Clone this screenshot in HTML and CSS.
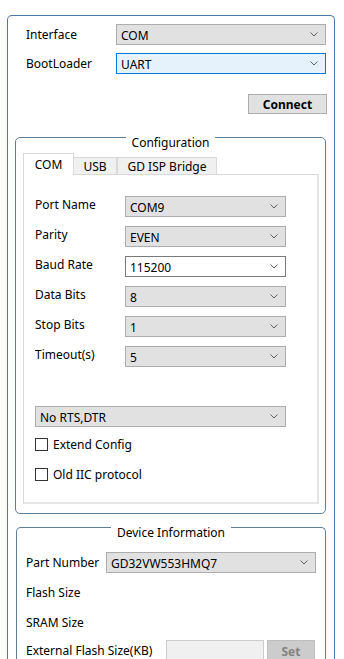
FILE: index.html
```html
<!DOCTYPE html>
<html>
<head>
<meta charset="utf-8">
<link rel="stylesheet" href="styles.css">
</head>
<body>
<div class="frame">
  <div class="top-rows">
    <div class="row">
      <span class="lbl lbl-top">Interface</span>
      <div class="combo combo-wide"><span>COM</span><svg class="chev" width="8" height="5" viewBox="0 0 8 5"><polyline points="0.5,0.5 4,4 7.5,0.5"/></svg></div>
    </div>
    <div class="row">
      <span class="lbl lbl-top">BootLoader</span>
      <div class="combo combo-wide combo-focus"><span>UART</span><svg class="chev" width="8" height="5" viewBox="0 0 8 5"><polyline points="0.5,0.5 4,4 7.5,0.5"/></svg></div>
    </div>
  </div>
  <div class="actions">
    <button class="btn btn-connect">Connect</button>
  </div>

  <section class="group group-config">
    <div class="group-title">Configuration</div>
    <div class="tabs">
      <div class="tab tab-active">COM</div>
      <div class="tab tab-usb">USB</div>
      <div class="tab tab-gd">GD ISP Bridge</div>
    </div>
    <div class="pane">
      <div class="pane-rows">
        <div class="row">
          <span class="lbl lbl-pane">Port Name</span>
          <div class="combo combo-pane"><span>COM9</span><svg class="chev" width="8" height="5" viewBox="0 0 8 5"><polyline points="0.5,0.5 4,4 7.5,0.5"/></svg></div>
        </div>
        <div class="row">
          <span class="lbl lbl-pane">Parity</span>
          <div class="combo combo-pane"><span>EVEN</span><svg class="chev" width="8" height="5" viewBox="0 0 8 5"><polyline points="0.5,0.5 4,4 7.5,0.5"/></svg></div>
        </div>
        <div class="row">
          <span class="lbl lbl-pane">Baud Rate</span>
          <div class="combo combo-pane combo-edit"><span>115200</span><svg class="chev" width="8" height="5" viewBox="0 0 8 5"><polyline points="0.5,0.5 4,4 7.5,0.5"/></svg></div>
        </div>
        <div class="row">
          <span class="lbl lbl-pane">Data Bits</span>
          <div class="combo combo-pane"><span>8</span><svg class="chev" width="8" height="5" viewBox="0 0 8 5"><polyline points="0.5,0.5 4,4 7.5,0.5"/></svg></div>
        </div>
        <div class="row">
          <span class="lbl lbl-pane">Stop Bits</span>
          <div class="combo combo-pane"><span>1</span><svg class="chev" width="8" height="5" viewBox="0 0 8 5"><polyline points="0.5,0.5 4,4 7.5,0.5"/></svg></div>
        </div>
        <div class="row">
          <span class="lbl lbl-pane">Timeout(s)</span>
          <div class="combo combo-pane"><span>5</span><svg class="chev" width="8" height="5" viewBox="0 0 8 5"><polyline points="0.5,0.5 4,4 7.5,0.5"/></svg></div>
        </div>
      </div>
      <div class="combo combo-rts"><span>No RTS,DTR</span><svg class="chev" width="8" height="5" viewBox="0 0 8 5"><polyline points="0.5,0.5 4,4 7.5,0.5"/></svg></div>
      <label class="check check-first"><span class="box"></span><span>Extend Config</span></label>
      <label class="check check-second"><span class="box"></span><span>Old IIC protocol</span></label>
    </div>
  </section>

  <section class="group group-device">
    <div class="group-title">Device Information</div>
    <div class="dev-rows">
      <div class="row">
        <span class="lbl lbl-dev">Part Number</span>
        <div class="combo combo-part"><span>GD32VW553HMQ7</span><svg class="chev" width="8" height="5" viewBox="0 0 8 5"><polyline points="0.5,0.5 4,4 7.5,0.5"/></svg></div>
      </div>
      <div class="row"><span class="lbl">Flash Size</span></div>
      <div class="row"><span class="lbl">SRAM Size</span></div>
      <div class="row row-ext">
        <span class="lbl lbl-ext">External Flash Size(KB)</span>
        <div class="field-disabled"></div>
        <button class="btn btn-set" disabled>Set</button>
      </div>
    </div>
  </section>
</div>
</body>
</html>
```

FILE: styles.css
```css
html, body {
  margin: 0;
  padding: 0;
  background: #ffffff;
  overflow: hidden;
}

body {
  font-family: "Noto Sans", "Liberation Sans", sans-serif;
  font-size: 12px;
  line-height: 17px;
  color: #000000;
  width: 344px;
  height: 659px;
}

.frame {
  margin: 15px 0 0 7px;
  width: 328px;
  height: 644px;
  box-sizing: border-box;
  border: 1px solid #4a77a3;
  border-bottom: none;
  border-radius: 5px 5px 0 0;
  display: flex;
  flex-direction: column;
  overflow: hidden;
}

.top-rows {
  padding: 8px 7px 0 18px;
  display: flex;
  flex-direction: column;
  gap: 8px;
}

.row {
  display: flex;
  align-items: center;
  height: 21px;
}

.lbl {
  white-space: nowrap;
}

.lbl-top {
  width: 90px;
  flex: none;
}

.combo {
  box-sizing: border-box;
  height: 21px;
  display: flex;
  align-items: center;
  justify-content: space-between;
  padding: 0 7px 0 4px;
  background: #e1e1e1;
  border: 1px solid #adadad;
  flex: none;
}

.combo span {
  line-height: 17px;
  padding-top: 1px;
}

.chev {
  flex: none;
}

.chev polyline {
  fill: none;
  stroke: #606060;
  stroke-width: 1;
}

.combo-wide {
  width: 210px;
}

.combo-focus {
  background: #e5f1fb;
  border-color: #0078d7;
}

.actions {
  display: flex;
  justify-content: flex-end;
  padding-right: 7px;
  margin-top: 20px;
}

.btn {
  font-family: inherit;
  font-size: 12px;
  font-weight: bold;
  box-sizing: border-box;
  margin: 0;
  padding: 0;
  background: #e1e1e1;
  border: 1px solid #adadad;
  color: #000;
  line-height: 17px;
}

.btn-connect {
  width: 79px;
  height: 20px;
}

.group {
  box-sizing: border-box;
  border: 1px solid #5f7e9c;
  border-radius: 5px;
  display: flex;
  flex-direction: column;
  flex: none;
}

.group-title {
  width: fit-content;
  margin: -4px auto 0;
  padding: 0 6px;
  background: #ffffff;
  line-height: 17px;
}

.group-config {
  margin: 23px 8px 0 7px;
  width: 311px;
}

.tabs {
  display: flex;
  align-items: flex-end;
  height: 21px;
  margin: 2px 0 0 7px;
}

.tab {
  box-sizing: border-box;
  height: 17px;
  background: #f0f0f0;
  border: 1px solid #d9d9d9;
  border-bottom: none;
  display: flex;
  align-items: center;
  justify-content: center;
  padding-top: 1px;
}

.tab-active {
  height: 22px;
  width: 51px;
  margin-bottom: -1px;
  background: #ffffff;
  position: relative;
  z-index: 1;
  padding-top: 0;
  padding-bottom: 1px;
}

.tab-usb {
  width: 43px;
  border-left: none;
}

.tab-gd {
  width: 100px;
  border-left: 1px solid #d9d9d9;
}

.pane {
  box-sizing: border-box;
  margin: 0 6px 9px 7px;
  width: 296px;
  height: 330px;
  border: 1px solid #d9d9d9;
  border-right: 2px solid #e6e6e6;
  border-bottom: 2px solid #e6e6e6;
  background: #ffffff;
  padding: 21px 0 0 11px;
  display: flex;
  flex-direction: column;
}

.pane-rows {
  display: flex;
  flex-direction: column;
  gap: 9px;
}

.lbl-pane {
  width: 90px;
  flex: none;
  align-self: flex-start;
  margin-top: 0;
}

.combo-pane {
  width: 161px;
}

.combo-edit {
  background: #ffffff;
  border-color: #7a7a7a;
}

.combo-rts {
  width: 251px;
  margin-top: 39px;
}

.check {
  display: flex;
  align-items: center;
  height: 17px;
  gap: 5px;
}

.check-first {
  margin-top: 9px;
}

.check-second {
  margin-top: 13px;
}

.box {
  box-sizing: border-box;
  width: 13px;
  height: 13px;
  border: 1px solid #333333;
  background: #ffffff;
  flex: none;
}

.group-device {
  margin: 13px 8px 0 8px;
  width: 310px;
  flex: 1 1 auto;
  border-bottom: none;
  border-radius: 5px 5px 0 0;
}

.dev-rows {
  display: flex;
  flex-direction: column;
  gap: 9px;
  padding: 11px 8px 0 9px;
}

.lbl-dev {
  width: 80px;
  flex: none;
}

.combo-part {
  width: 210px;
}

.lbl-ext {
  width: 140px;
  flex: none;
}

.row-ext {
  align-items: flex-start;
}

.field-disabled {
  box-sizing: border-box;
  width: 98px;
  height: 23px;
  margin-top: -2px;
  background: #f0f0f0;
  border: 1px solid #cccccc;
  flex: none;
}

.btn-set {
  width: 48px;
  height: 23px;
  margin: -2px 0 0 3px;
  background: #cccccc;
  border-color: #bfbfbf;
  color: #838383;
}
```
